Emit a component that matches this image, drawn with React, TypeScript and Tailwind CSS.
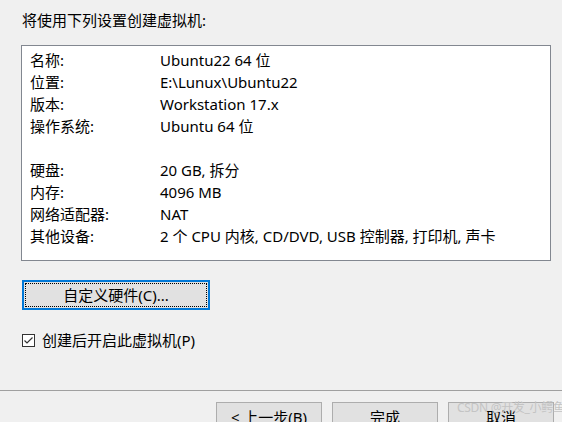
import React from "react";

const rows: [string, string][] = [
  ["名称:", "Ubuntu22 64 位"],
  ["位置:", "E:\\Lunux\\Ubuntu22"],
  ["版本:", "Workstation 17.x"],
  ["操作系统:", "Ubuntu 64 位"],
  ["", ""],
  ["硬盘:", "20 GB, 拆分"],
  ["内存:", "4096 MB"],
  ["网络适配器:", "NAT"],
  ["其他设备:", "2 个 CPU 内核, CD/DVD, USB 控制器, 打印机, 声卡"],
];

export default function App() {
  return (
    <div
      className="relative w-[562px] h-[422px] overflow-hidden bg-[#f0f0f0] text-black text-[15px]"
      style={{ fontFamily: '"Segoe UI", "Noto Sans", "Noto Sans CJK SC", sans-serif' }}
    >
      <div className="pl-[22px] pt-[10px] leading-[20px] h-[35px]">将使用下列设置创建虚拟机:</div>
      <div className="ml-[21px] mt-[10px] w-[530px] h-[216px] border border-[#828790] bg-white pt-[3px] pl-[8px]">
        {rows.map(([k, v], i) => (
          <div key={i} className="flex h-[22px] leading-[22px] whitespace-nowrap">
            <div className="w-[130px]">{k}</div>
            <div>{v}</div>
          </div>
        ))}
      </div>
      <div className="ml-[22px] mt-[19px] w-[188px] h-[30px] border-2 border-[#0078d7] bg-[#e1e1e1] p-px">
        <div className="h-full w-full border border-dotted border-black flex items-center justify-center leading-none">
          自定义硬件(C)...
        </div>
      </div>
      <div className="ml-[22px] mt-[20px] h-[20px] flex items-center gap-[7px]">
        <div className="w-[13px] h-[13px] border border-[#333] bg-white flex items-center justify-center">
          <svg width="11" height="11" viewBox="0 0 11 11">
            <path d="M1.5 5.5 L4 8 L9.5 2.5" fill="none" stroke="#333" strokeWidth="1.2" />
          </svg>
        </div>
        <span className="leading-[20px]">创建后开启此虚拟机(P)</span>
      </div>
      <div className="mt-[40px] h-px bg-[#a0a0a0]" />
      <div className="mt-[11px] pl-[216px] flex gap-[10px]">
        {["< 上一步(B)", "完成", "取消"].map((t) => (
          <div
            key={t}
            className="w-[106px] h-[30px] border border-[#adadad] bg-[#e1e1e1] flex items-center justify-center leading-none shrink-0"
          >
            {t}
          </div>
        ))}
      </div>
      <div className="absolute left-[457px] top-[401px] text-[12px] leading-[14px] text-[#c4c4c4] whitespace-nowrap tracking-[-0.3px]">
        CSDN @开发_小鳄鱼
      </div>
    </div>
  );
}
